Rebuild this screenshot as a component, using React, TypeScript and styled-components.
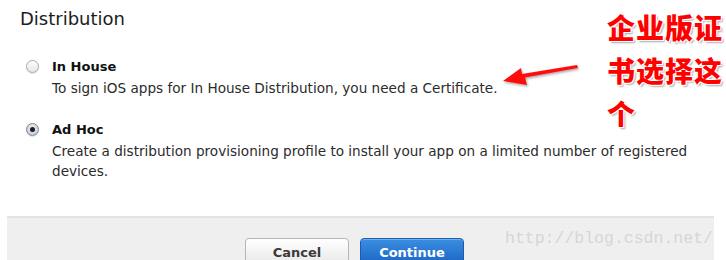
import styled, { createGlobalStyle } from "styled-components"

const GlobalStyle = createGlobalStyle`
  html, body {
    margin: 0;
    padding: 0;
    background: #ffffff;
  }
  body {
    font-family: "DejaVu Sans", "Liberation Sans", sans-serif;
    color: #222;
  }
`

const options = [
    {
        id: "inhouse",
        title: "In House",
        lines: ["To sign iOS apps for In House Distribution, you need a Certificate."],
        checked: false,
    },
    {
        id: "adhoc",
        title: "Ad Hoc",
        lines: [
            "Create a distribution provisioning profile to install your app on a limited number of registered",
            "devices.",
        ],
        checked: true,
    },
]

const App = () => {
    return (
        <Page>
            <GlobalStyle />
            <Content>
                <Title>Distribution</Title>
                <OptionList>
                    {options.map((o) => (
                        <Option key={o.id}>
                            <Radio checked={o.checked} />
                            <OptionBody>
                                <OptionTitle>{o.title}</OptionTitle>
                                {o.lines.map((l) => (
                                    <OptionText key={l}>{l}</OptionText>
                                ))}
                            </OptionBody>
                        </Option>
                    ))}
                </OptionList>
            </Content>
            <Footer>
                <Button>Cancel</Button>
                <Button $primary>Continue</Button>
            </Footer>

            <Arrow width="82" height="26" viewBox="0 0 82 26">
                <defs>
                    <filter id="sh" x="-20%" y="-50%" width="140%" height="200%">
                        <feDropShadow dx="1" dy="1.5" stdDeviation="1" floodColor="#000" floodOpacity="0.35" />
                    </filter>
                </defs>
                <path
                    d="M76 3 L77 6 L24 15.5 L26 23 L2 19 L20 6 L21 12 Z"
                    fill="#ff0d0d"
                    filter="url(#sh)"
                />
            </Arrow>

            <Note>
                企业版证
                <br />
                书选择这
                <br />个
            </Note>
            <Watermark>http://blog.csdn.net/</Watermark>
        </Page>
    )
}

export default App

const Page = styled.div`
    position: relative;
    width: 726px;
    height: 260px;
    overflow: hidden;
    background: #fff;
`

const Content = styled.div`
    padding: 8px 0 0 20px;
    height: 216px;
    box-sizing: border-box;
`

const Title = styled.h1`
    margin: 0;
    font-size: 18px;
    font-weight: normal;
    line-height: 22px;
    color: #1c1c1c;
`

const OptionList = styled.div`
    display: flex;
    flex-direction: column;
    gap: 21px;
    margin-top: 26px;
`

const Option = styled.div`
    display: flex;
    align-items: flex-start;
    gap: 13px;
`

const Radio = styled.span<{ checked: boolean }>`
    position: relative;
    flex: none;
    width: 13px;
    height: 13px;
    margin: 4px 0 0 6px;
    border-radius: 50%;
    border: 1px solid ${(p) => (p.checked ? "#7d8692" : "#a9a9a9")};
    box-sizing: border-box;
    background: ${(p) =>
        p.checked
            ? "radial-gradient(circle at 50% 35%, #eef2f7 0%, #c9d1dc 70%, #aab4c2 100%)"
            : "linear-gradient(#fdfdfd, #e6e6e6)"};
    box-shadow: 0 1px 1px rgba(0, 0, 0, 0.12);

    &::after {
        content: "";
        display: ${(p) => (p.checked ? "block" : "none")};
        position: absolute;
        left: 50%;
        top: 50%;
        width: 5px;
        height: 5px;
        margin: -2.5px 0 0 -2.5px;
        border-radius: 50%;
        background: #1e1e1e;
    }
`

const OptionBody = styled.div`
    display: flex;
    flex-direction: column;
`

const OptionTitle = styled.div`
    font-size: 13px;
    font-weight: bold;
    line-height: 22px;
    color: #111;
`

const OptionText = styled.div`
    font-size: 13.6px;
    line-height: 20px;
    color: #2b2b2b;
    white-space: nowrap;
`

const Footer = styled.div`
    margin: 0 12px 0 7px;
    height: 44px;
    box-sizing: border-box;
    background: #efefef;
    border-top: 2px solid #e3e3e3;
    display: flex;
    justify-content: center;
    align-items: flex-start;
    gap: 11px;
    padding: 20px 12px 0 0;
`

const Button = styled.button<{ $primary?: boolean }>`
    width: 104px;
    height: 26px;
    border-radius: 4px;
    font-family: "DejaVu Sans", "Liberation Sans", sans-serif;
    font-size: 13px;
    font-weight: bold;
    padding: 2px 0 0;
    color: ${(p) => (p.$primary ? "#fff" : "#3a3a3a")};
    border: 1px solid ${(p) => (p.$primary ? "#1a5cab" : "#b5b5b5")};
    background: ${(p) =>
        p.$primary
            ? "linear-gradient(#3a8ee0, #1d67c6)"
            : "linear-gradient(#ffffff, #e9e9e9)"};
    box-shadow: inset 0 1px 0 ${(p) => (p.$primary ? "rgba(255,255,255,0.3)" : "#fff")};
`

const Arrow = styled.svg`
    position: absolute;
    left: 501px;
    top: 62px;
`

const Note = styled.div`
    position: absolute;
    left: 607px;
    top: 6px;
    font-family: "Noto Sans CJK SC", sans-serif;
    font-weight: 900;
    font-size: 28px;
    line-height: 43px;
    color: #ff0000;
    letter-spacing: 1px;
    text-shadow:
        -1px -1px 0 #fff,
        1px -1px 0 #fff,
        -1px 1px 0 #fff,
        1px 1px 0 #fff,
        2px 2px 2px rgba(0, 0, 0, 0.35);
`

const Watermark = styled.div`
    position: absolute;
    left: 505px;
    top: 229px;
    font-family: "Liberation Mono", monospace;
    font-size: 16.5px;
    color: #d6d6d6;
    white-space: nowrap;
`
